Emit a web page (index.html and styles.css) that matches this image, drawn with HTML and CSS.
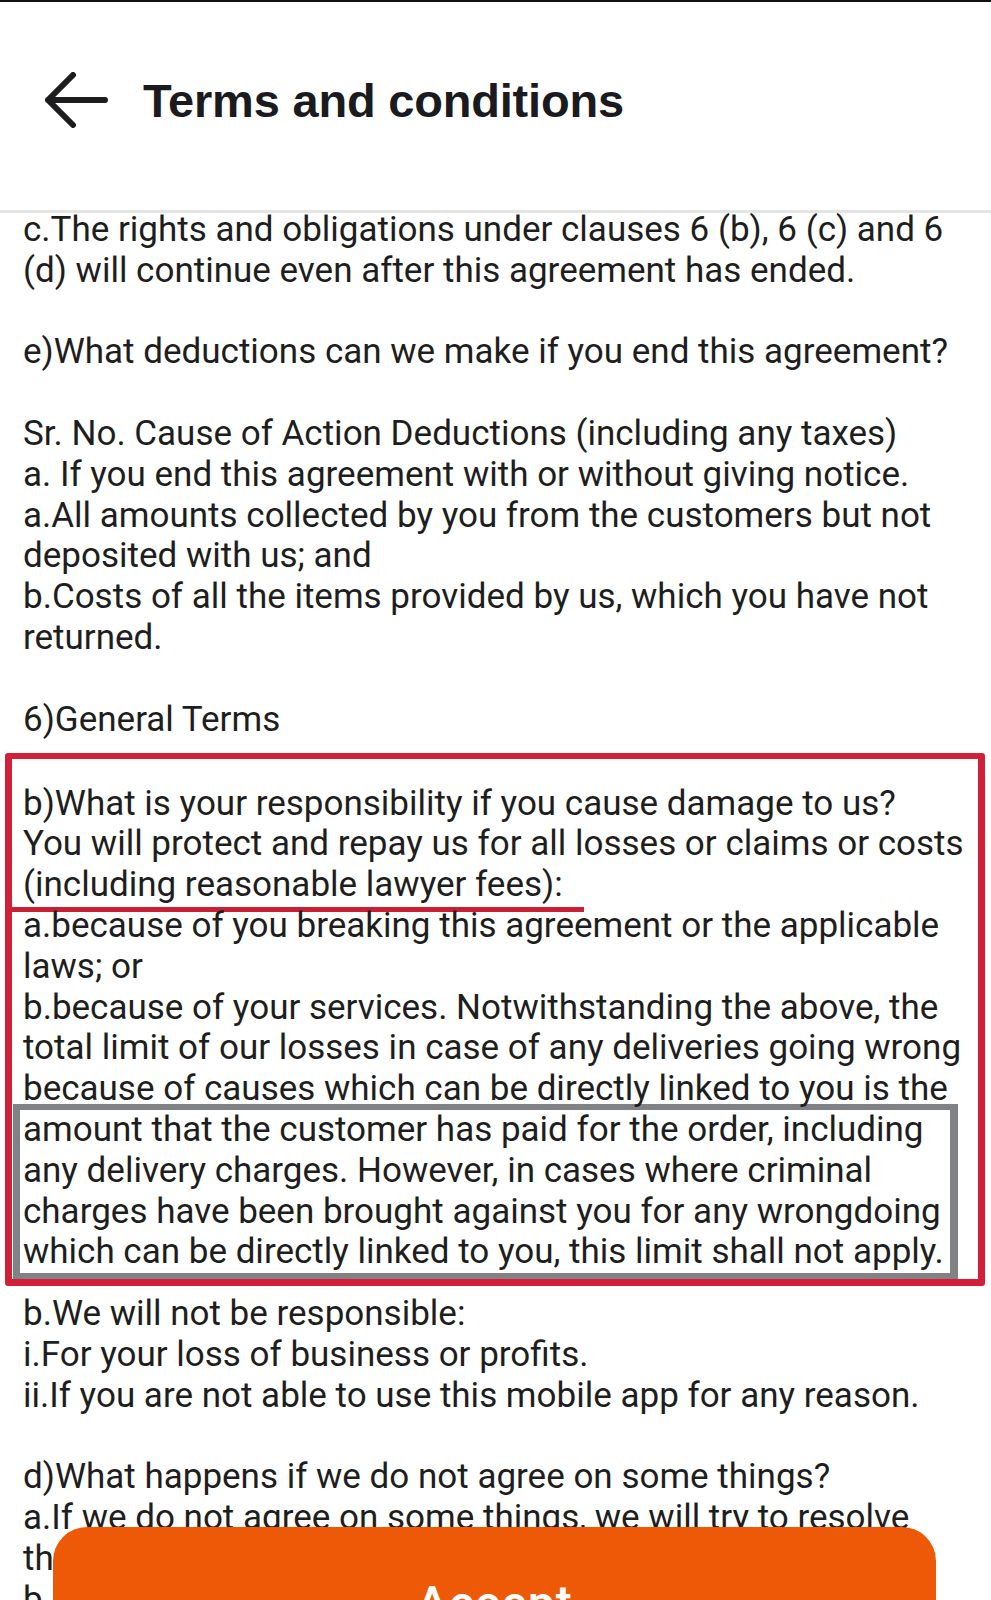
FILE: index.html
```html
<!DOCTYPE html>
<html lang="en">
<head>
<meta charset="utf-8">
<title>Terms and conditions</title>
<link rel="stylesheet" href="styles.css">
</head>
<body>
<header class="appbar">
  <svg class="back" viewBox="0 0 64 56" width="64" height="56" aria-hidden="true">
    <path d="M61 28 H4 M29 3 L4 28 L29 53" fill="none" stroke="#1c1c1e" stroke-width="6" stroke-linecap="round" stroke-linejoin="round"/>
  </svg>
  <h1 class="title">Terms and conditions</h1>
</header>

<main class="content">
  <p class="para">c.The rights and obligations under clauses 6 (b), 6 (c) and 6<br>(d) will continue even after this agreement has ended.</p>
  <p class="para">e)What deductions can we make if you end this agreement?</p>
  <p class="para">Sr. No. Cause of Action Deductions (including any taxes)<br>a. If you end this agreement with or without giving notice.<br>a.All amounts collected by you from the customers but not<br>deposited with us; and<br>b.Costs of all the items provided by us, which you have not<br>returned.</p>
  <p class="para tight">6)General Terms</p>

  <section class="highlight">
    <p class="para tight">b)What is your responsibility if you cause damage to us?<br>You will protect and repay us for all losses or claims or costs<br>(including reasonable lawyer fees):</p>
    <div class="underline"></div>
    <p class="para tight">a.because of you breaking this agreement or the applicable<br>laws; or<br>b.because of your services. Notwithstanding the above, the<br>total limit of our losses in case of any deliveries going wrong<br>because of causes which can be directly linked to you is the</p>
    <div class="limit">
      <p class="para tight">amount that the customer has paid for the order, including<br>any delivery charges. However, in cases where criminal<br>charges have been brought against you for any wrongdoing<br>which can be directly linked to you, this limit shall not apply.</p>
    </div>
  </section>

  <p class="para after">b.We will not be responsible:<br>i.For your loss of business or profits.<br>ii.If you are not able to use this mobile app for any reason.</p>
  <p class="para">d)What happens if we do not agree on some things?<br>a.If we do not agree on some things, we will try to resolve<br>them by talking to each other in good faith.<br>b.If not, the courts will decide.</p>
</main>

<div class="accept" role="button">Accept</div>
</body>
</html>
```

FILE: styles.css
```css
html, body {
  margin: 0;
  padding: 0;
  width: 991px;
  height: 1600px;
  overflow: hidden;
  background: #ffffff;
}

body {
  font-family: Roboto, "Noto Sans", "Liberation Sans", sans-serif;
  color: #1e1e1e;
}

.appbar {
  box-sizing: border-box;
  height: 213px;
  border-top: 2px solid #111111;
  border-bottom: 3px solid #e4e4e4;
  padding: 0 0 12px 44px;
  display: flex;
  align-items: center;
  background: #ffffff;
}

.back {
  display: block;
  flex: none;
}

.title {
  margin: 0 0 0 35px;
  font-family: "Liberation Sans", Arial, sans-serif;
  font-weight: 700;
  font-size: 47px;
  letter-spacing: -0.2px;
  color: #1b1b1f;
  line-height: 1;
}

.content {
  margin-top: -3px;
}

.para {
  margin: 0 0 40.8px;
  padding-left: 23px;
  font-size: 35px;
  line-height: 40.8px;
  white-space: nowrap;
}

.para.tight {
  margin-bottom: 0;
}

.highlight {
  margin: 12.6px 6px 0 5px;
  border-style: solid;
  border-color: #d21f3a;
  border-width: 6px 7px 7px 7px;
  border-radius: 3px;
  padding: 24.6px 0 0 0;
}

.highlight .para {
  padding-left: 11px;
}

.underline {
  width: 572px;
  height: 5px;
  margin: 1px 0 -6px 0;
  background: #c81f33;
}

.limit {
  box-sizing: border-box;
  width: 945px;
  margin: -6px 0 0 1px;
  border-style: solid;
  border-color: #808285;
  border-width: 6px 8px 6px 7px;
}

.limit .para {
  padding-left: 3px;
}

.para.after {
  margin-top: 8px;
}

.accept {
  position: fixed;
  left: 53px;
  top: 1527px;
  width: 883px;
  height: 150px;
  box-sizing: border-box;
  border-radius: 34px;
  background: #ee5907;
  color: #ffffff;
  font-family: Roboto, "Noto Sans", sans-serif;
  font-weight: 500;
  font-size: 48px;
  letter-spacing: 1px;
  line-height: normal;
  padding-top: 48px;
  text-align: center;
}
```
